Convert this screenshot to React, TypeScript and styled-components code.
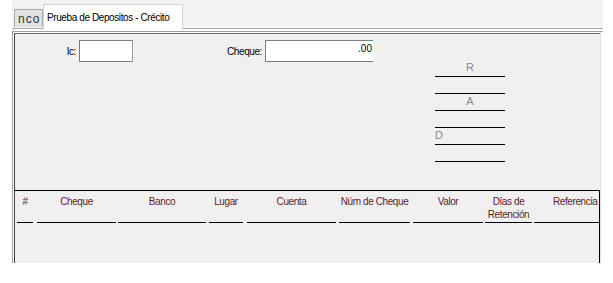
import styled, { createGlobalStyle } from 'styled-components';

const GlobalStyle = createGlobalStyle`
  body {
    margin: 0;
    background: #ffffff;
    font-family: "Liberation Sans", Arial, sans-serif;
  }
`;

const Window = styled.div`
  margin-left: 12px;
  width: 591px;
`;

const TabStrip = styled.div`
  display: flex;
  align-items: flex-end;
  height: 28px;
  padding-left: 2px;
  background: #f4f4f4;
  border-bottom: 1px solid #a8a8a8;
`;

const Tab = styled.div<{ $active?: boolean }>`
  display: flex;
  align-items: center;
  box-sizing: border-box;
  height: ${(p) => (p.$active ? '25px' : '18px')};
  margin-bottom: ${(p) => (p.$active ? '-1px' : '1px')};
  padding: ${(p) => (p.$active ? '0 0 0 3px' : '0 0 0 3px')};
  width: ${(p) => (p.$active ? '140px' : '29px')};
  background: ${(p) => (p.$active ? '#ffffff' : '#e2e2e2')};
  border: 1px solid ${(p) => (p.$active ? '#d4d4d4' : '#a8a8a8')};
  border-bottom: none;
  color: ${(p) => (p.$active ? '#000000' : '#333333')};
  font-size: ${(p) => (p.$active ? '10px' : '12px')};
  letter-spacing: ${(p) => (p.$active ? '-0.4px' : '1px')};
  white-space: nowrap;
  overflow: hidden;
`;

const PanelOuter = styled.div`
  margin-top: 2px;
  padding: 1px 1px 0 1px;
  background: #ffffff;
  border-top: 1px solid #a0a0a0;
  border-left: 1px solid #a0a0a0;
  border-right: 1px solid #ffffff;
`;

const PanelInner = styled.div`
  background: #f0f0f0;
  border-top: 1px solid #6a6a6a;
  border-left: 1px solid #404040;
  border-right: 1px solid #e3e3e3;
`;

const TopSection = styled.div`
  display: flex;
  height: 156px;
`;

const FieldRow = styled.div`
  display: grid;
  grid-template-columns: 62px 54px 128px 108px;
  column-gap: 2px;
  align-items: center;
  align-self: flex-start;
  margin-top: 6px;
`;

const Label = styled.div`
  text-align: right;
  padding-right: 1px;
  font-size: 10px;
  letter-spacing: -0.4px;
  color: #000000;
`;

const InputBox = styled.div<{ $open?: boolean }>`
  box-sizing: border-box;
  height: 22px;
  padding: 2px 1px 0 0;
  background: #ffffff;
  border: 1px solid #7c7c7c;
  border-right: ${(p) => (p.$open ? 'none' : '1px solid #9a9a9a')};
  text-align: right;
  font-size: 10px;
  line-height: 12px;
  color: #000000;
`;

const SignColumn = styled.div`
  display: flex;
  flex-direction: column;
  width: 70px;
  margin-top: 26px;
  margin-left: 62px;
`;

const SignLine = styled.div<{ $align?: string }>`
  height: 16px;
  border-bottom: 1px solid #000000;
  font-size: 11px;
  line-height: 14px;
  color: #888888;
  text-align: ${(p) => p.$align || 'center'};
  overflow: hidden;
`;

const Table = styled.div`
  border-top: 1px solid #000000;
  border-right: 1px solid #000000;
`;

const HeaderRow = styled.div`
  display: flex;
  height: 32px;
  padding-left: 2px;
`;

const HeaderCell = styled.div<{ $w: number; $gap: number; $pad?: number }>`
  box-sizing: border-box;
  width: ${(p) => p.$w}px;
  margin-right: ${(p) => p.$gap}px;
  padding: 4px 0 0 ${(p) => p.$pad || 0}px;
  border-bottom: 1px solid #000000;
  text-align: ${(p) => (p.$pad ? 'left' : 'center')};
  font-size: 10px;
  line-height: 13px;
  letter-spacing: -0.4px;
  color: #5e1c1c;
  white-space: ${(p) => (p.$pad ? 'nowrap' : 'normal')};
  overflow: hidden;
`;

const TableBody = styled.div`
  height: 40px;
`;

const columns = [
  { label: '#', w: 16, gap: 4 },
  { label: 'Cheque', w: 79, gap: 2 },
  { label: 'Banco', w: 88, gap: 3 },
  { label: 'Lugar', w: 34, gap: 4 },
  { label: 'Cuenta', w: 89, gap: 3 },
  { label: 'Núm  de Cheque', w: 71, gap: 3 },
  { label: 'Valor', w: 70, gap: 2 },
  { label: 'Días de Retención', w: 47, gap: 2 },
  { label: 'Referencia', w: 65, gap: 0, pad: 19 },
];

const signLines = [
  { text: 'R' },
  { text: '' },
  { text: 'A' },
  { text: '' },
  { text: 'D', align: 'left' },
  { text: '' },
];

export default function App() {
  return (
    <>
      <GlobalStyle />
      <Window>
        <TabStrip>
          <Tab>nco</Tab>
          <Tab $active>Prueba de Depositos - Crécito</Tab>
        </TabStrip>
        <PanelOuter>
          <PanelInner>
            <TopSection>
              <FieldRow>
                <Label>Ic:</Label>
                <InputBox />
                <Label>Cheque:</Label>
                <InputBox $open>.00</InputBox>
              </FieldRow>
              <SignColumn>
                {signLines.map((s, i) => (
                  <SignLine key={i} $align={s.align}>
                    {s.text}
                  </SignLine>
                ))}
              </SignColumn>
            </TopSection>
            <Table>
              <HeaderRow>
                {columns.map((c) => (
                  <HeaderCell key={c.label} $w={c.w} $gap={c.gap} $pad={c.pad}>
                    {c.label}
                  </HeaderCell>
                ))}
              </HeaderRow>
              <TableBody />
            </Table>
          </PanelInner>
        </PanelOuter>
      </Window>
    </>
  );
}
